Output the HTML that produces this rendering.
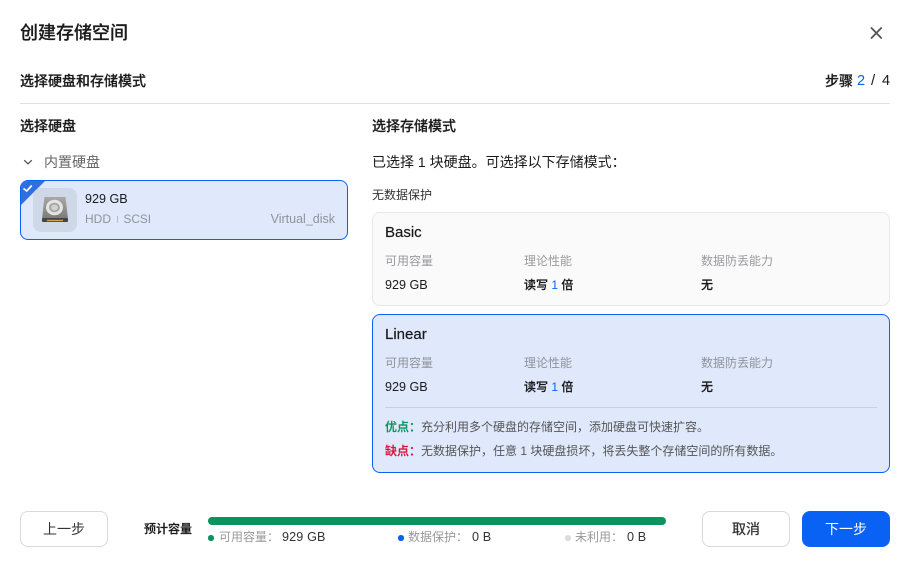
<!DOCTYPE html>
<html lang="zh-CN"><head><meta charset="utf-8"><title>创建存储空间</title>
<style>
*{box-sizing:border-box}
html,body{margin:0;padding:0;background:#fff}
body{width:912px;height:569px;position:relative;overflow:hidden;font-family:"Liberation Sans","Noto Sans CJK SC",sans-serif;color:#1a1a1a;font-size:12px}
.t{position:absolute;white-space:nowrap;line-height:18px;height:18px}
.g{color:#8f939a}
.b{font-weight:500;-webkit-text-stroke:.2px currentColor}
.blue{color:#0a62f5}
.box{position:absolute;border-radius:8px}
.dot{position:absolute;width:5.5px;height:5.5px;border-radius:50%}
.v{font-size:12.6px;letter-spacing:.15px;color:#333}
.btn{position:absolute;top:511px;height:36px;width:88px;border-radius:8px;border:1px solid #d9d9db;background:#fff;text-align:center;line-height:34px;font-size:14px;color:#333}
</style></head><body>
<div class="t b" style="left:20px;top:21px;font-size:18px;line-height:24px;height:24px">创建存储空间</div>
<svg style="position:absolute;left:868px;top:25px" width="16" height="16" viewBox="0 0 16 16"><path d="M3 2.5L13.7 13.5M13.7 2.5L3 13.5" stroke="#555" stroke-width="1.8" fill="none"/></svg>
<div class="t b" style="left:20px;top:71px;font-size:14px;line-height:20px;height:20px">选择硬盘和存储模式</div>
<div class="t b" style="left:825px;top:71px;font-size:14px;line-height:20px;height:20px">步骤</div>
<div class="t blue" style="left:857px;top:71px;font-size:14.5px;line-height:20px;height:20px">2</div>
<div class="t" style="left:871px;top:71px;font-size:15px;line-height:20px;height:20px">/</div>
<div class="t" style="left:882px;top:71px;font-size:14.5px;line-height:20px;height:20px">4</div>
<div style="position:absolute;left:20px;top:103px;width:870px;height:1px;background:#e0e0e2"></div>

<div class="t b" style="left:20px;top:116px;font-size:14px;line-height:20px;height:20px">选择硬盘</div>
<svg style="position:absolute;left:22px;top:156px" width="12" height="12" viewBox="0 0 12 12"><path d="M2.2 4.2L6 7.8L9.8 4.2" stroke="#555" stroke-width="1.3" fill="none"/></svg>
<div class="t" style="left:44px;top:152px;font-size:14px;line-height:20px;height:20px;color:#666">内置硬盘</div>

<div class="box" style="left:20px;top:180px;width:328px;height:60px;background:#dfe9fb;border:1px solid #0a62f5;overflow:hidden">
<svg style="position:absolute;left:-1px;top:-1px" width="27" height="27" viewBox="0 0 27 27"><path d="M0 0H26L0 26Z" fill="#2f6fe0"/><path d="M3.5 8.5L6.8 11L11.8 5.5" stroke="#fff" stroke-width="1.7" fill="none"/></svg>
</div>
<div class="box" style="left:33px;top:188px;width:44px;height:44px;background:#cfd8e6;border-radius:8px"></div>
<svg style="position:absolute;left:41px;top:195px" width="28" height="30" viewBox="0 0 28 30">
<defs><linearGradient id="h" x1="0" y1="0" x2="0" y2="1"><stop offset="0" stop-color="#a8a8a6"/><stop offset="1" stop-color="#7a7a78"/></linearGradient></defs>
<path d="M3.5 2H24.5L27 24H1Z" fill="url(#h)"/><rect x="1" y="23" width="26" height="4" rx="1" fill="#454543"/><rect x="6" y="24.8" width="16" height="1.4" fill="#c9a64a"/>
<ellipse cx="13.5" cy="12.5" rx="8.5" ry="7.8" fill="#e4e4e2"/><ellipse cx="13.5" cy="12.5" rx="5.4" ry="4.8" fill="#a5a5a3"/><ellipse cx="13.5" cy="12.5" rx="3.4" ry="3" fill="#d2d2d0"/></svg>
<div class="t" style="left:85px;top:190px;font-size:12.6px">929 GB</div>
<div class="t g" style="left:85px;top:210px">HDD</div>
<div style="position:absolute;left:117px;top:216px;width:1px;height:7px;background:#b8bcc4"></div>
<div class="t g" style="left:123.5px;top:210px;font-size:11.8px">SCSI</div>
<div class="t g" style="right:577px;top:210px;font-size:12.5px">Virtual_disk</div>

<div class="t b" style="left:372px;top:116px;font-size:14px;line-height:20px;height:20px">选择存储模式</div>
<div class="t" style="left:372px;top:152px;font-size:14px;line-height:20px;height:20px">已选择 1 块硬盘。可选择以下存储模式：</div>
<div class="t" style="left:372px;top:186px;color:#333">无数据保护</div>

<div class="box" style="left:372px;top:212px;width:518px;height:94px;background:#fafafa;border:1px solid #e8e8e9"></div>
<div class="t b" style="left:385px;top:223px;font-size:15px;line-height:20px;height:20px">Basic</div>
<div class="t g" style="left:385px;top:252px;color:#9a9a9d">可用容量</div>
<div class="t g" style="left:524px;top:252px;color:#9a9a9d">理论性能</div>
<div class="t g" style="left:701px;top:252px;color:#9a9a9d">数据防丢能力</div>
<div class="t" style="left:385px;top:276px;font-size:12.6px">929 GB</div>
<div class="t" style="left:524px;top:276px"><span class="b">读写</span> <span class="blue">1</span> <span class="b">倍</span></div>
<div class="t b" style="left:701px;top:276px">无</div>

<div class="box" style="left:372px;top:314px;width:518px;height:159px;background:#dfe9fb;border:1px solid #0a62f5"></div>
<div class="t b" style="left:385px;top:325px;font-size:15px;line-height:20px;height:20px">Linear</div>
<div class="t g" style="left:385px;top:354px">可用容量</div>
<div class="t g" style="left:524px;top:354px">理论性能</div>
<div class="t g" style="left:701px;top:354px">数据防丢能力</div>
<div class="t" style="left:385px;top:378px;font-size:12.6px">929 GB</div>
<div class="t" style="left:524px;top:378px"><span class="b">读写</span> <span class="blue">1</span> <span class="b">倍</span></div>
<div class="t b" style="left:701px;top:378px">无</div>
<div style="position:absolute;left:385px;top:407px;width:492px;height:1px;background:#c8d0de"></div>
<div class="t" style="left:385px;top:418px;color:#555"><span class="b" style="color:#0a8f5c">优点：</span>充分利用多个硬盘的存储空间，添加硬盘可快速扩容。</div>
<div class="t" style="left:385px;top:442px;color:#555"><span class="b" style="color:#e0103a">缺点：</span>无数据保护，任意 1 块硬盘损坏，将丢失整个存储空间的所有数据。</div>

<div class="btn" style="left:20px">上一步</div>
<div class="t b" style="left:144px;top:520px">预计容量</div>
<div style="position:absolute;left:208px;top:517px;width:458px;height:8px;border-radius:4px;background:#0a935c"></div>
<div class="dot" style="left:208px;top:535px;background:#0a935c"></div>
<div class="t" style="left:219px;top:528px;color:#999">可用容量：</div>
<div class="t v" style="left:282px;top:528px">929 GB</div>
<div class="dot" style="left:398px;top:535px;background:#0a62f5"></div>
<div class="t" style="left:408px;top:528px;color:#999">数据保护：</div>
<div class="t v" style="left:472px;top:528px">0 B</div>
<div class="dot" style="left:565px;top:535px;background:#dcdcdc"></div>
<div class="t" style="left:575px;top:528px;color:#999">未利用：</div>
<div class="t v" style="left:627px;top:528px">0 B</div>
<div class="btn" style="left:702px;font-weight:400;-webkit-text-stroke:.3px #333">取消</div>
<div class="btn" style="left:802px;background:#0a62f5;border-color:#0a62f5;color:#fff">下一步</div>
</body></html>
